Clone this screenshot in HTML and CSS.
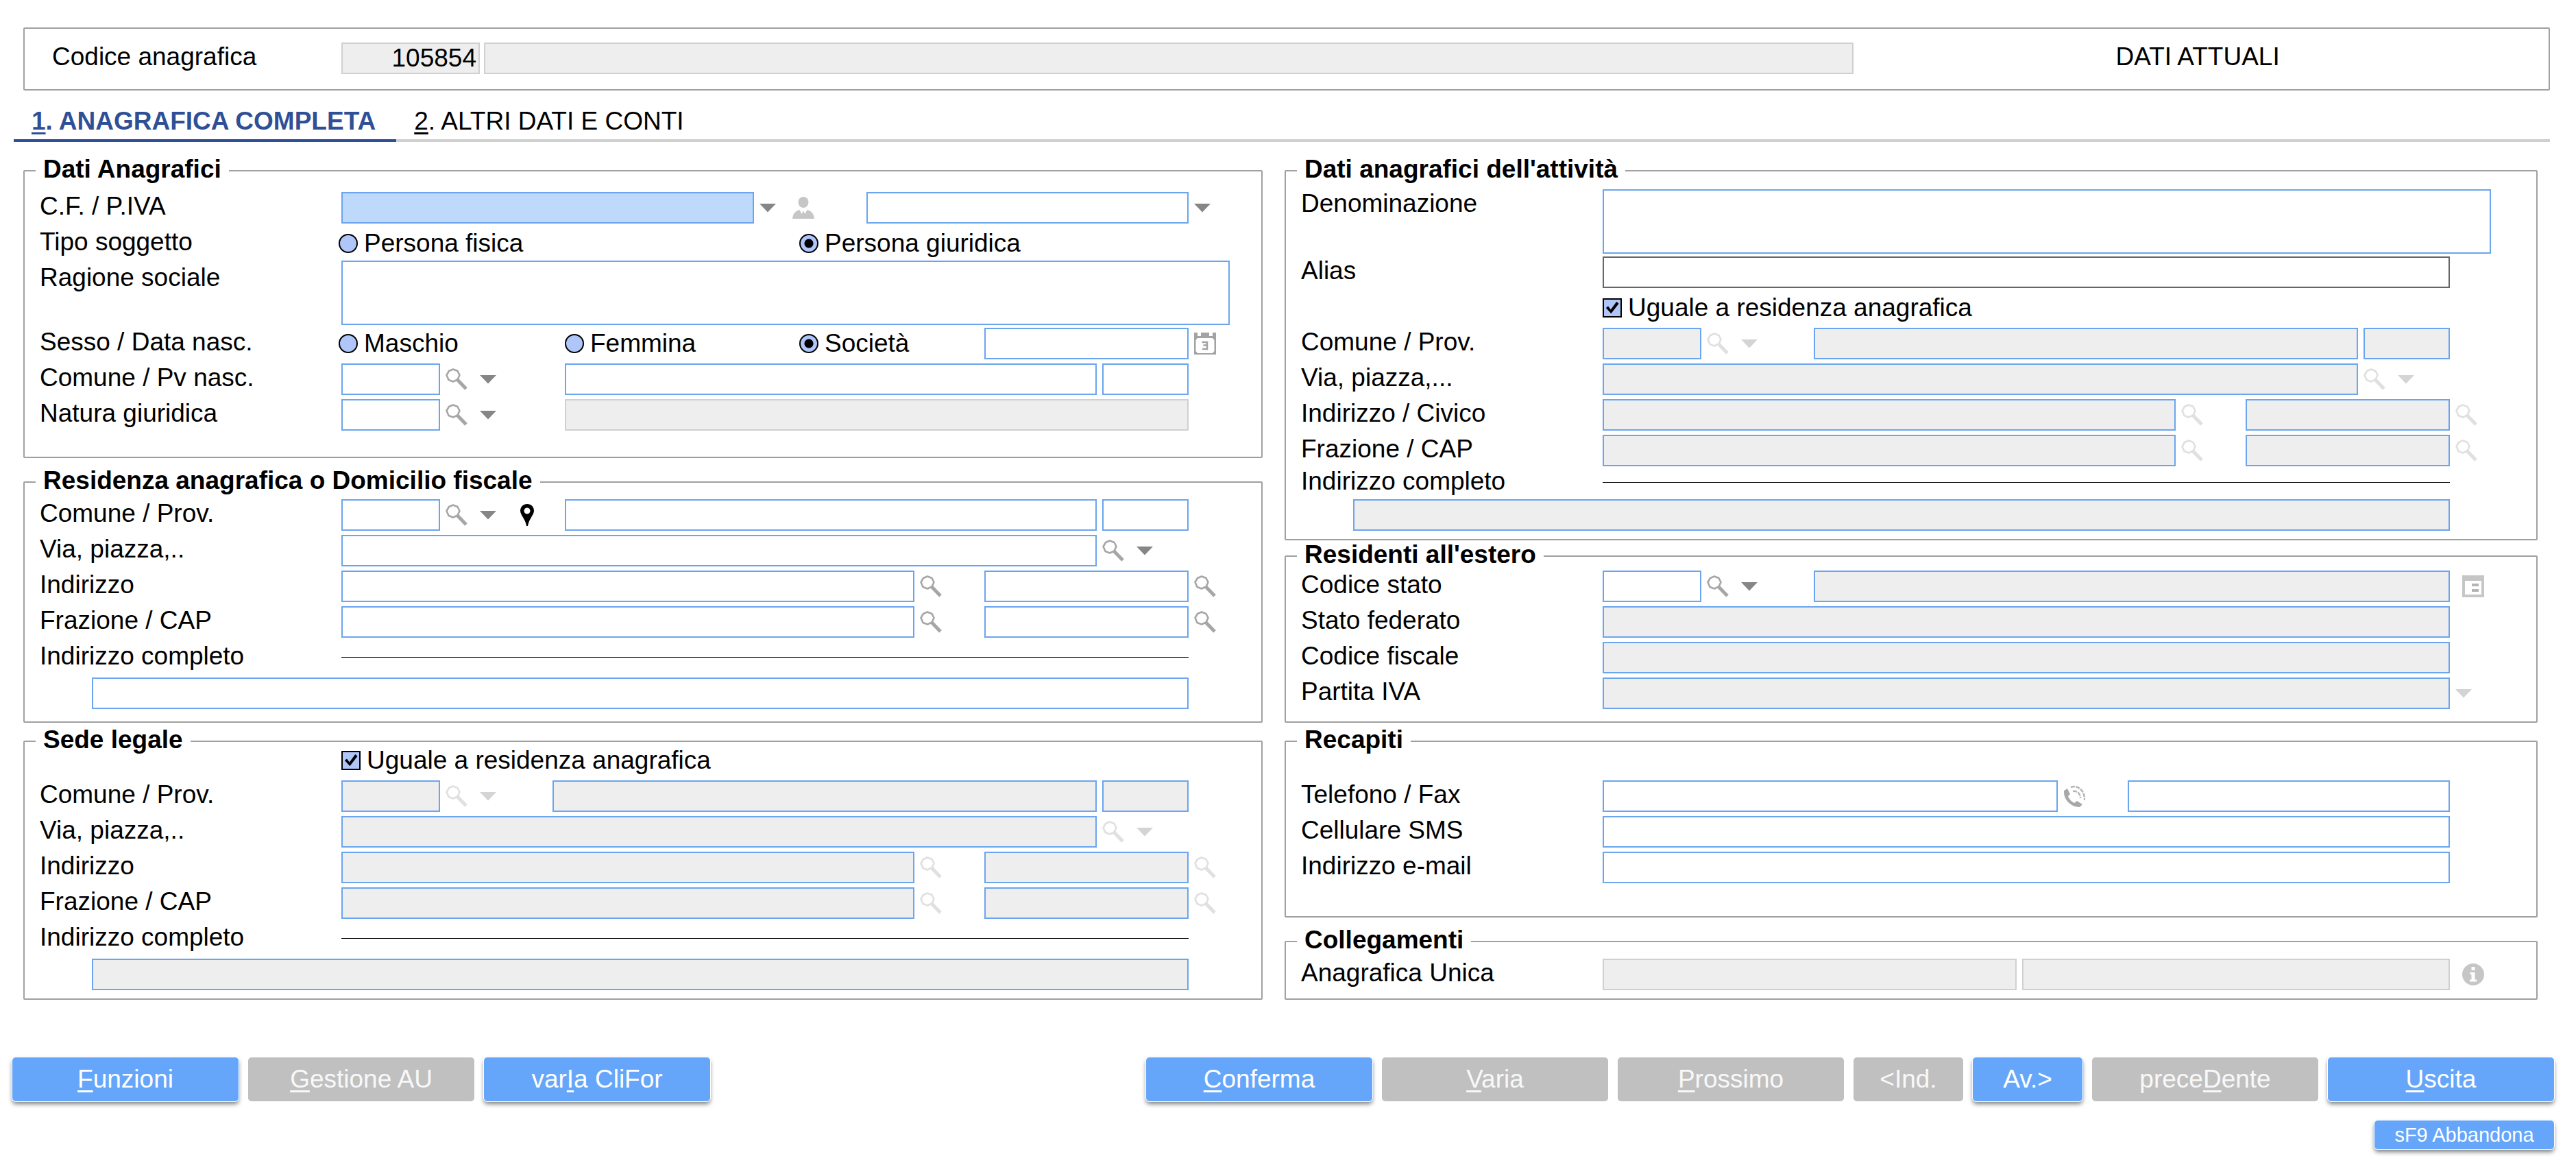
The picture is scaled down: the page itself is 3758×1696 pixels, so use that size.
FILE: index.html
```
<!DOCTYPE html>
<html lang="it">
<head>
    <meta charset="UTF-8">
    <meta name="viewport" content="width=device-width, initial-scale=1.0">
    <title>Anagrafica completa</title>
    <link rel="stylesheet" href="styles.css">
</head>
<body>
    <!-- Icon sprite -->
    <svg class="sprite" aria-hidden="true">
        <symbol id="i-lens" viewBox="0 0 32 32">
            <path d="M5 4 L11 1.500 L17.500 4 L20.500 10 L17.500 16.500 L11 19.500 L4.500 17 L1.500 10 Z" fill="#fff" stroke="#a6a7a5" stroke-width="2.600" stroke-linejoin="round"/>
            <path d="M17 16.500 L30 30" stroke="#a6a7a5" stroke-width="5"/>
        </symbol>
        <symbol id="i-arrow" viewBox="0 0 24 32">
            <path d="M0 10 H24 L12 22.500 Z" fill="#868686"/>
        </symbol>
        <symbol id="i-pin" viewBox="0 0 20 32">
            <path fill-rule="evenodd" d="M10 0 C4 0 0 4.200 0 9.800 C0 16 7.500 22 9 32 H11 C12.500 22 20 16 20 9.800 C20 4.200 16 0 10 0 Z M10 5.500 A4.500 4.500 0 1 1 10 14.500 A4.500 4.500 0 1 1 10 5.500 Z" fill="#000"/>
        </symbol>
        <symbol id="i-person" viewBox="0 0 32 32">
            <ellipse cx="16" cy="8" rx="7.500" ry="8" fill="#c6c6c6"/>
            <path d="M0 32 C1 24 4 21 10.500 19 L13.500 25 L16 20.500 L18.500 25 L21.500 19 C28 21 31 24 32 32 Z" fill="#c6c6c6"/>
        </symbol>
        <symbol id="i-calendar" viewBox="0 0 32 32">
            <path fill-rule="evenodd" d="M0 0 H5 V5 H10 V0 H22 V5 H27 V0 H32 V32 H0 Z M5 8 L2.500 11 V27 L5 30 H27 L29.500 27 V11 L27 8 Z" fill="#a3a3a3"/>
            <path d="M11.500 14 H19 V24 H12 M13.500 18.500 H19" fill="none" stroke="#a3a3a3" stroke-width="2.500"/>
        </symbol>
        <symbol id="i-card" viewBox="0 0 32 32">
            <path fill-rule="evenodd" d="M0 0 H32 V32 H0 Z M4 8 V28 H28 V8 Z" fill="#c6c6c6"/>
            <path d="M14 12 H24 V16 H14 Z M14 20 H24 V24 H14 Z" fill="#b4b4b4"/>
        </symbol>
        <symbol id="i-phone" viewBox="0 0 32 32">
            <path d="M1 8 L6 5 L10 13 L7 16 C9 21 12 24 16 26 L20 23 L28 28 L24 32 C10 32 0 20 1 8 Z" fill="#a8a8a8"/>
            <path d="M11 3 C21 -1 32 8 31 22 M14 9 C21 8 25 13 25 19" fill="none" stroke="#b4b4b4" stroke-width="2.500" stroke-dasharray="6 1.500"/>
        </symbol>
        <symbol id="i-info" viewBox="0 0 32 32">
            <circle cx="16" cy="16" r="16" fill="#c6c6c6"/>
            <path d="M13.500 5 H18.500 V10 H13.500 Z M11.500 13 H18.500 V23.500 H21 V26.500 H11 V23.500 H13.500 V16 H11.500 Z" fill="#fff"/>
        </symbol>
    </svg>

    <header class="code-box">
        <label class="label" for="codice">Codice anagrafica</label>
        <div class="code-fields">
            <input class="field readonly code-num" id="codice" type="text" value="105854" readonly>
            <input class="field readonly grow" type="text" aria-label="Descrizione anagrafica" readonly>
        </div>
        <div class="status">DATI ATTUALI</div>
    </header>

    <nav class="tabs">
        <a class="tab active" href="#anagrafica"><u>1</u>. ANAGRAFICA COMPLETA</a>
        <a class="tab" href="#conti"><u>2</u>. ALTRI DATI E CONTI</a>
    </nav>

    <form>
        <div class="columns" id="anagrafica">
            <div class="column">
                <!-- Dati Anagrafici -->
                <fieldset class="group group-main">
                    <legend>Dati Anagrafici</legend>
                    <div class="row">
                        <label class="label" for="cf">C.F. / P.IVA</label>
                        <div class="main">
                            <input class="field grow current" id="cf" type="text">
                            <div class="slot slot-cf">
                                <button class="icon arrow" type="button" aria-label="Elenco codici fiscali"><svg><use href="#i-arrow"/></svg></button>
                                <button class="icon" type="button" aria-label="Persona" disabled><svg><use href="#i-person"/></svg></button>
                            </div>
                            <input class="field w-party" type="text" aria-label="Partita IVA">
                        </div>
                        <div class="tail">
                            <button class="icon arrow" type="button" aria-label="Elenco partite IVA"><svg><use href="#i-arrow"/></svg></button>
                        </div>
                    </div>
                    <div class="row">
                        <span class="label">Tipo soggetto</span>
                        <div class="main choices">
                            <label class="choice wide"><input type="radio" name="tipo">Persona fisica</label>
                            <label class="choice wide"><input type="radio" name="tipo" checked>Persona giuridica</label>
                        </div>
                    </div>
                    <div class="row row-tall">
                        <label class="label" for="ragione">Ragione sociale</label>
                        <textarea class="field area" id="ragione"></textarea>
                    </div>
                    <div class="row">
                        <span class="label">Sesso / Data nasc.</span>
                        <div class="main choices">
                            <label class="choice"><input type="radio" name="sesso">Maschio</label>
                            <label class="choice"><input type="radio" name="sesso">Femmina</label>
                            <label class="choice"><input type="radio" name="sesso" checked>Società</label>
                            <input class="field" type="text" aria-label="Data di nascita">
                        </div>
                        <div class="tail">
                            <button class="icon" type="button" aria-label="Calendario"><svg><use href="#i-calendar"/></svg></button>
                        </div>
                    </div>
                    <div class="row">
                        <label class="label" for="com-nasc">Comune / Pv nasc.</label>
                        <div class="main">
                            <input class="field w-code" id="com-nasc" type="text">
                            <div class="slot slot-wide">
                                <button class="icon" type="button" aria-label="Cerca comune"><svg><use href="#i-lens"/></svg></button>
                                <button class="icon arrow" type="button" aria-label="Elenco comuni"><svg><use href="#i-arrow"/></svg></button>
                            </div>
                            <input class="field grow" type="text" aria-label="Comune di nascita">
                            <input class="field w-prov" type="text" aria-label="Provincia di nascita">
                        </div>
                    </div>
                    <div class="row">
                        <label class="label" for="natura">Natura giuridica</label>
                        <div class="main">
                            <input class="field w-code" id="natura" type="text">
                            <div class="slot slot-wide">
                                <button class="icon" type="button" aria-label="Cerca natura giuridica"><svg><use href="#i-lens"/></svg></button>
                                <button class="icon arrow" type="button" aria-label="Elenco nature giuridiche"><svg><use href="#i-arrow"/></svg></button>
                            </div>
                            <input class="field grow readonly" type="text" aria-label="Descrizione natura giuridica" readonly>
                        </div>
                    </div>
                </fieldset>

                <!-- Residenza -->
                <fieldset class="group group-residenza">
                    <legend>Residenza anagrafica o Domicilio fiscale</legend>
                    <div class="row">
                        <label class="label" for="res-com">Comune / Prov.</label>
                        <div class="main">
                            <input class="field w-code" id="res-com" type="text">
                            <div class="slot slot-wide">
                                <button class="icon" type="button" aria-label="Cerca comune"><svg><use href="#i-lens"/></svg></button>
                                <button class="icon arrow" type="button" aria-label="Elenco comuni"><svg><use href="#i-arrow"/></svg></button>
                                <button class="icon pin" type="button" aria-label="Mappa"><svg><use href="#i-pin"/></svg></button>
                            </div>
                            <input class="field grow" type="text" aria-label="Comune di residenza">
                            <input class="field w-prov" type="text" aria-label="Provincia di residenza">
                        </div>
                    </div>
                    <div class="row">
                        <label class="label" for="res-via">Via, piazza,..</label>
                        <div class="main">
                            <input class="field grow" id="res-via" type="text">
                            <div class="slot slot-prov">
                                <button class="icon" type="button" aria-label="Cerca via"><svg><use href="#i-lens"/></svg></button>
                                <button class="icon arrow" type="button" aria-label="Elenco vie"><svg><use href="#i-arrow"/></svg></button>
                            </div>
                        </div>
                    </div>
                    <div class="row">
                        <label class="label" for="res-ind">Indirizzo</label>
                        <div class="main">
                            <input class="field grow" id="res-ind" type="text">
                            <div class="slot slot-small">
                                <button class="icon" type="button" aria-label="Cerca indirizzo"><svg><use href="#i-lens"/></svg></button>
                            </div>
                            <input class="field w-mid" type="text" aria-label="Civico">
                        </div>
                        <div class="tail">
                            <button class="icon" type="button" aria-label="Cerca civico"><svg><use href="#i-lens"/></svg></button>
                        </div>
                    </div>
                    <div class="row">
                        <label class="label" for="res-fraz">Frazione / CAP</label>
                        <div class="main">
                            <input class="field grow" id="res-fraz" type="text">
                            <div class="slot slot-small">
                                <button class="icon" type="button" aria-label="Cerca frazione"><svg><use href="#i-lens"/></svg></button>
                            </div>
                            <input class="field w-mid" type="text" aria-label="CAP">
                        </div>
                        <div class="tail">
                            <button class="icon" type="button" aria-label="Cerca CAP"><svg><use href="#i-lens"/></svg></button>
                        </div>
                    </div>
                    <div class="row">
                        <label class="label" for="res-completo">Indirizzo completo</label>
                        <div class="main"><hr class="rule"></div>
                    </div>
                    <div class="row row-full">
                        <input class="field grow" id="res-completo" type="text">
                    </div>
                </fieldset>

                <!-- Sede legale -->
                <fieldset class="group group-sede">
                    <legend>Sede legale</legend>
                    <div class="row row-check">
                        <label class="choice"><input type="checkbox" checked>Uguale a residenza anagrafica</label>
                    </div>
                    <div class="row">
                        <label class="label" for="sede-com">Comune / Prov.</label>
                        <div class="main">
                            <input class="field w-code" id="sede-com" type="text" disabled>
                            <div class="slot">
                                <button class="icon" type="button" aria-label="Cerca comune" disabled><svg class="faded"><use href="#i-lens"/></svg></button>
                                <button class="icon arrow" type="button" aria-label="Elenco comuni" disabled><svg class="faded"><use href="#i-arrow"/></svg></button>
                            </div>
                            <input class="field grow" type="text" aria-label="Comune sede" disabled>
                            <input class="field w-prov" type="text" aria-label="Provincia sede" disabled>
                        </div>
                    </div>
                    <div class="row">
                        <label class="label" for="sede-via">Via, piazza,..</label>
                        <div class="main">
                            <input class="field grow" id="sede-via" type="text" disabled>
                            <div class="slot slot-prov">
                                <button class="icon" type="button" aria-label="Cerca via" disabled><svg class="faded"><use href="#i-lens"/></svg></button>
                                <button class="icon arrow" type="button" aria-label="Elenco vie" disabled><svg class="faded"><use href="#i-arrow"/></svg></button>
                            </div>
                        </div>
                    </div>
                    <div class="row">
                        <label class="label" for="sede-ind">Indirizzo</label>
                        <div class="main">
                            <input class="field grow" id="sede-ind" type="text" disabled>
                            <div class="slot slot-small">
                                <button class="icon" type="button" aria-label="Cerca indirizzo" disabled><svg class="faded"><use href="#i-lens"/></svg></button>
                            </div>
                            <input class="field w-mid" type="text" aria-label="Civico sede" disabled>
                        </div>
                        <div class="tail">
                            <button class="icon" type="button" aria-label="Cerca civico" disabled><svg class="faded"><use href="#i-lens"/></svg></button>
                        </div>
                    </div>
                    <div class="row">
                        <label class="label" for="sede-fraz">Frazione / CAP</label>
                        <div class="main">
                            <input class="field grow" id="sede-fraz" type="text" disabled>
                            <div class="slot slot-small">
                                <button class="icon" type="button" aria-label="Cerca frazione" disabled><svg class="faded"><use href="#i-lens"/></svg></button>
                            </div>
                            <input class="field w-mid" type="text" aria-label="CAP sede" disabled>
                        </div>
                        <div class="tail">
                            <button class="icon" type="button" aria-label="Cerca CAP" disabled><svg class="faded"><use href="#i-lens"/></svg></button>
                        </div>
                    </div>
                    <div class="row">
                        <label class="label" for="sede-completo">Indirizzo completo</label>
                        <div class="main"><hr class="rule"></div>
                    </div>
                    <div class="row row-full">
                        <input class="field grow" id="sede-completo" type="text" disabled>
                    </div>
                </fieldset>
            </div>

            <div class="column column-right">
                <!-- Dati anagrafici dell'attività -->
                <fieldset class="group group-attivita">
                    <legend>Dati anagrafici dell'attività</legend>
                    <div class="row row-tall">
                        <label class="label" for="denom">Denominazione</label>
                        <textarea class="field area" id="denom"></textarea>
                    </div>
                    <div class="row">
                        <label class="label" for="alias">Alias</label>
                        <div class="main">
                            <input class="field grow alias" id="alias" type="text">
                        </div>
                    </div>
                    <div class="row row-check">
                        <label class="choice"><input type="checkbox" checked>Uguale a residenza anagrafica</label>
                    </div>
                    <div class="row">
                        <label class="label" for="att-com">Comune / Prov.</label>
                        <div class="main">
                            <input class="field w-code" id="att-com" type="text" disabled>
                            <div class="slot">
                                <button class="icon" type="button" aria-label="Cerca comune" disabled><svg class="faded"><use href="#i-lens"/></svg></button>
                                <button class="icon arrow" type="button" aria-label="Elenco comuni" disabled><svg class="faded"><use href="#i-arrow"/></svg></button>
                            </div>
                            <input class="field grow" type="text" aria-label="Comune attività" disabled>
                            <input class="field w-prov" type="text" aria-label="Provincia attività" disabled>
                        </div>
                    </div>
                    <div class="row">
                        <label class="label" for="att-via">Via, piazza,...</label>
                        <div class="main">
                            <input class="field grow" id="att-via" type="text" disabled>
                            <div class="slot slot-prov">
                                <button class="icon" type="button" aria-label="Cerca via" disabled><svg class="faded"><use href="#i-lens"/></svg></button>
                                <button class="icon arrow" type="button" aria-label="Elenco vie" disabled><svg class="faded"><use href="#i-arrow"/></svg></button>
                            </div>
                        </div>
                    </div>
                    <div class="row">
                        <label class="label" for="att-ind">Indirizzo / Civico</label>
                        <div class="main">
                            <input class="field grow" id="att-ind" type="text" disabled>
                            <div class="slot slot-small">
                                <button class="icon" type="button" aria-label="Cerca indirizzo" disabled><svg class="faded"><use href="#i-lens"/></svg></button>
                            </div>
                            <input class="field w-mid" type="text" aria-label="Civico attività" disabled>
                        </div>
                        <div class="tail">
                            <button class="icon" type="button" aria-label="Cerca civico" disabled><svg class="faded"><use href="#i-lens"/></svg></button>
                        </div>
                    </div>
                    <div class="row row-tight">
                        <label class="label" for="att-fraz">Frazione / CAP</label>
                        <div class="main">
                            <input class="field grow" id="att-fraz" type="text" disabled>
                            <div class="slot slot-small">
                                <button class="icon" type="button" aria-label="Cerca frazione" disabled><svg class="faded"><use href="#i-lens"/></svg></button>
                            </div>
                            <input class="field w-mid" type="text" aria-label="CAP attività" disabled>
                        </div>
                        <div class="tail">
                            <button class="icon" type="button" aria-label="Cerca CAP" disabled><svg class="faded"><use href="#i-lens"/></svg></button>
                        </div>
                    </div>
                    <div class="row row-tight">
                        <label class="label" for="att-completo">Indirizzo completo</label>
                        <div class="main"><hr class="rule"></div>
                    </div>
                    <div class="row row-full">
                        <input class="field grow" id="att-completo" type="text" disabled>
                    </div>
                </fieldset>

                <!-- Residenti all'estero -->
                <fieldset class="group group-estero">
                    <legend>Residenti all'estero</legend>
                    <div class="row">
                        <label class="label" for="stato">Codice stato</label>
                        <div class="main">
                            <input class="field w-code" id="stato" type="text">
                            <div class="slot">
                                <button class="icon" type="button" aria-label="Cerca stato"><svg><use href="#i-lens"/></svg></button>
                                <button class="icon arrow" type="button" aria-label="Elenco stati"><svg><use href="#i-arrow"/></svg></button>
                            </div>
                            <input class="field grow" type="text" aria-label="Descrizione stato" disabled>
                        </div>
                        <div class="tail tail-far">
                            <button class="icon" type="button" aria-label="Dettaglio stato" disabled><svg><use href="#i-card"/></svg></button>
                        </div>
                    </div>
                    <div class="row">
                        <label class="label" for="federato">Stato federato</label>
                        <div class="main"><input class="field grow" id="federato" type="text" disabled></div>
                    </div>
                    <div class="row">
                        <label class="label" for="cf-estero">Codice fiscale</label>
                        <div class="main"><input class="field grow" id="cf-estero" type="text" disabled></div>
                    </div>
                    <div class="row">
                        <label class="label" for="piva-estero">Partita IVA</label>
                        <div class="main"><input class="field grow" id="piva-estero" type="text" disabled></div>
                        <div class="tail">
                            <button class="icon arrow" type="button" aria-label="Elenco partite IVA estere" disabled><svg class="faded"><use href="#i-arrow"/></svg></button>
                        </div>
                    </div>
                </fieldset>

                <!-- Recapiti -->
                <fieldset class="group group-recapiti">
                    <legend>Recapiti</legend>
                    <div class="row">
                        <label class="label" for="tel">Telefono / Fax</label>
                        <div class="main">
                            <input class="field grow" id="tel" type="tel">
                            <div class="slot slot-small">
                                <button class="icon" type="button" aria-label="Chiama"><svg><use href="#i-phone"/></svg></button>
                            </div>
                            <input class="field w-party" type="tel" aria-label="Fax">
                        </div>
                    </div>
                    <div class="row">
                        <label class="label" for="sms">Cellulare SMS</label>
                        <div class="main"><input class="field grow" id="sms" type="tel"></div>
                    </div>
                    <div class="row">
                        <label class="label" for="email">Indirizzo e-mail</label>
                        <div class="main"><input class="field grow" id="email" type="email"></div>
                    </div>
                </fieldset>

                <!-- Collegamenti -->
                <fieldset class="group group-collegamenti">
                    <legend>Collegamenti</legend>
                    <div class="row">
                        <label class="label" for="unica">Anagrafica Unica</label>
                        <div class="main">
                            <input class="field w-link readonly" id="unica" type="text" readonly>
                            <input class="field grow readonly" type="text" aria-label="Descrizione anagrafica unica" readonly>
                        </div>
                        <div class="tail tail-far">
                            <button class="icon" type="button" aria-label="Informazioni" disabled><svg><use href="#i-info"/></svg></button>
                        </div>
                    </div>
                </fieldset>
            </div>
        </div>

        <footer class="actions">
            <div class="buttons">
                <button class="btn" type="button"><u>F</u>unzioni</button>
                <button class="btn" type="button" disabled><u>G</u>estione AU</button>
                <button class="btn" type="button">var<u>I</u>a CliFor</button>
            </div>
            <div class="buttons">
                <button class="btn" type="button"><u>C</u>onferma</button>
                <button class="btn" type="button" disabled><u>V</u>aria</button>
                <button class="btn" type="button" disabled><u>P</u>rossimo</button>
                <button class="btn btn-short" type="button" disabled>&lt;Ind.</button>
                <button class="btn btn-short" type="button">Av.&gt;</button>
                <button class="btn" type="button" disabled>prece<u>D</u>ente</button>
                <button class="btn" type="button"><u>U</u>scita</button>
            </div>
        </footer>
        <div class="exit">
            <button class="btn btn-small" type="button">sF9 Abbandona</button>
        </div>
    </form>
</body>
</html>
```
FILE: styles.css
```
* {
    box-sizing: border-box;
}
body {
    margin: 0;
    padding: 40px 32px 20px 18px;
    background: #fff;
    color: #000;
    font-family: Arial, "Liberation Sans", sans-serif;
    font-size: 37px;
    line-height: 42px;
}
.sprite {
    display: none;
}

/* Header */
.code-box {
    display: flex;
    margin: 0 6px 0 16px;
    padding: 20px 0 22px 40px;
    border: 2px solid #a0a0a0;
    border-radius: 2px;
}
.code-box .label {
    width: 422px;
}
.code-fields {
    display: flex;
    flex: 2220;
    gap: 6px;
}
.code-num {
    width: 202px;
    text-align: right;
}
.status {
    flex: 1010;
    padding-right: 10px;
    text-align: center;
}

/* Tabs */
.tabs {
    display: flex;
    margin: 0 6px 0 2px;
    border-bottom: 4px solid #d0d0d0;
}
.tab {
    margin-bottom: -4px;
    padding: 24px 30px 5px 26px;
    border-bottom: 4px solid transparent;
    color: #000;
    text-decoration: none;
}
.tab.active {
    border-color: #2f5096;
    color: #2f5096;
    font-weight: bold;
}
u {
    text-decoration-thickness: 3px;
    text-underline-offset: 4px;
}

/* Form groups */
.columns {
    display: grid;
    grid-template-columns: 1808fr 1828fr;
    gap: 32px;
    margin: 21px 24px 0 16px;
}
.column {
    --tail: 106px;
}
.column-right {
    --tail: 126px;
}
.group {
    min-width: 0;
    margin: 0 0 6px;
    padding: 0 0 12px 22px;
    border: 2px solid #a0a0a0;
    border-radius: 2px;
}
.group legend {
    margin-left: -6px;
    padding: 0 11px 4px;
    font-weight: bold;
    line-height: 38px;
}
.group-main {
    margin-bottom: 14px;
    padding-top: 10px;
    padding-bottom: 38px;
}
.group-residenza {
    padding-top: 4px;
    padding-bottom: 18px;
}
.group-sede legend + .row {
    margin-top: -16px;
}
.group-attivita {
    margin-bottom: 2px;
    padding-top: 6px;
}
.group-estero {
    padding-bottom: 18px;
}
.group-recapiti {
    margin-bottom: 14px;
    padding-top: 36px;
    padding-bottom: 48px;
}
.group-collegamenti {
    margin-bottom: 0;
    padding-top: 4px;
}

/* Rows */
.row {
    display: grid;
    grid-template-columns: 440px minmax(0, 1fr) var(--tail);
    min-height: 46px;
    margin-bottom: 6px;
}
.row:last-child {
    margin-bottom: 0;
}
.row-tight {
    margin-bottom: 1px;
}
.row-tall {
    margin-bottom: 4px;
}
.row + .row-tall {
    margin-top: -4px;
}
.row + .row-tall .label {
    padding-top: 4px;
}
.row-full {
    display: flex;
    padding-left: 76px;
    padding-right: var(--tail);
}
.row-check {
    display: flex;
    padding-left: 440px;
}
.main {
    display: flex;
}
.main .field + .field {
    margin-left: 8px;
}
.slot,
.tail {
    display: flex;
    align-items: center;
    gap: 18px;
    padding-left: 8px;
}
.slot {
    flex: none;
    width: 164px;
}
.slot-cf {
    gap: 24px;
}
.slot-wide {
    width: 182px;
}
.slot-small {
    width: 102px;
}
.slot-prov {
    width: 134px;
}
.tail-far {
    padding-left: 18px;
}

/* Fields */
.field {
    height: 46px;
    min-width: 0;
    margin: 0;
    padding: 0 3px;
    border: 2px solid #6aa5ee;
    border-radius: 0;
    background: #fff;
    color: #000;
    font: inherit;
    outline: none;
}
.field:disabled {
    background: #eee;
}
.field.readonly {
    border-color: #d0d0d0;
    background: #eee;
}
.field.current {
    background: #bfd9fd;
}
.field.alias {
    border-color: #666;
}
.grow {
    flex: 1;
}
.area {
    grid-column: 2 / 4;
    height: 94px;
    margin-right: calc(var(--tail) - 60px);
    resize: none;
}
.w-code {
    width: 144px;
}
.w-prov {
    width: 126px;
}
.w-mid {
    width: 298px;
}
.w-party {
    width: 470px;
}
.w-link {
    width: 604px;
}
.rule {
    align-self: flex-start;
    width: 100%;
    margin: 22px 0 0;
    border: 0;
    border-top: 1px solid #000;
}

/* Radios and checkboxes */
.choices {
    display: grid;
    grid-template-columns: 330px 342px 1fr 298px;
}
.choice {
    display: flex;
    align-items: center;
    gap: 9px;
}
.choices .choice {
    margin-left: -4px;
}
.choice.wide {
    grid-column: span 2;
}
.choice input {
    appearance: none;
    flex: none;
    width: 28px;
    height: 28px;
    margin: 0;
    border: 2px solid #000;
    background: #b0c6f9;
}
.choice input[type="radio"] {
    border-radius: 50%;
}
.choice input[type="radio"]:checked {
    background: radial-gradient(circle, #000 6px, #b0c6f9 7px);
}
.choice input[type="checkbox"]:checked::before {
    content: "";
    display: block;
    width: 24px;
    height: 24px;
    background: #000;
    clip-path: polygon(12% 50%, 25% 40%, 41% 60%, 76% 12%, 90% 24%, 43% 84%);
}

/* Icons */
.icon {
    flex: none;
    width: 32px;
    height: 32px;
    padding: 0;
    border: 0;
    background: none;
    cursor: pointer;
}
.icon:disabled {
    cursor: default;
}
.icon svg {
    display: block;
    width: 100%;
    height: 100%;
}
.icon.arrow {
    width: 24px;
}
.icon.pin {
    width: 20px;
    margin-left: 17px;
}
.faded {
    opacity: 0.35;
}

/* Buttons */
.actions {
    display: flex;
    justify-content: space-between;
    margin-top: 78px;
}
.buttons {
    display: flex;
    gap: 14px;
}
.exit {
    display: flex;
    justify-content: flex-end;
    margin-top: 28px;
}
.btn {
    width: 330px;
    height: 64px;
    padding: 0;
    border: 0;
    border-radius: 5px;
    background: #66a6fa;
    box-shadow: 0 0 0 1px #fff, 0 4px 6px rgba(0, 0, 0, 0.5);
    color: #fff;
    font: inherit;
    cursor: pointer;
}
.btn:disabled {
    background: #c0c0c0;
    box-shadow: none;
    color: #f8f8f8;
    cursor: default;
}
.btn-short {
    width: 160px;
}
.btn-small {
    width: 262px;
    height: 42px;
    font-size: 29px;
    line-height: 38px;
}
```
